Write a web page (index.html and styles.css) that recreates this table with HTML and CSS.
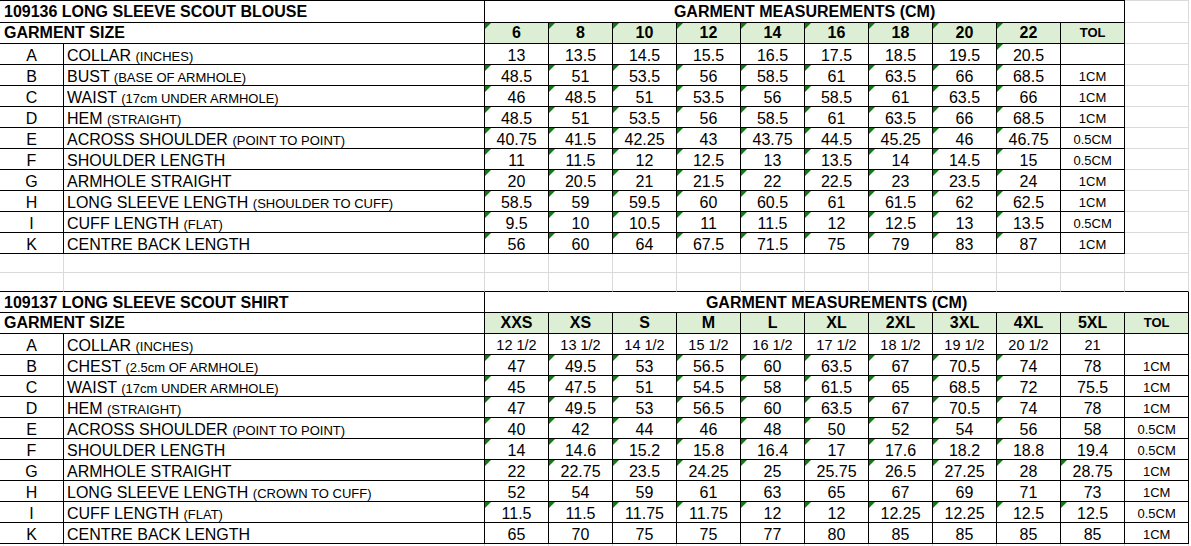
FILE: index.html
```html
<!DOCTYPE html>
<html>
<head>
<meta charset="utf-8">
<title>Scout sizing</title>
<link rel="stylesheet" href="styles.css">
</head>
<body>
<table class="sheet">
<colgroup>
<col class="c-key"><col class="c-label">
<col class="c-n"><col class="c-n"><col class="c-n"><col class="c-n"><col class="c-n"><col class="c-n"><col class="c-n"><col class="c-n"><col class="c-n"><col class="c-n"><col class="c-n">
</colgroup>
<tbody>
<tr class="row-title first">
<td class="title" colspan="2">109136 LONG SLEEVE SCOUT BLOUSE</td>
<td class="hdr" colspan="10">GARMENT MEASUREMENTS (CM)</td>
<td class="g"></td>
</tr>
<tr class="row-head">
<td class="title" colspan="2">GARMENT SIZE</td>
<td class="size t">6</td><td class="size t">8</td><td class="size t">10</td><td class="size t">12</td><td class="size t">14</td><td class="size t">16</td><td class="size t">18</td><td class="size t">20</td><td class="size t">22</td><td class="size tolh">TOL</td>
<td class="g"></td>
</tr>
<tr>
<td>A</td><td class="label">COLLAR <small>(INCHES)</small></td>
<td>13</td><td>13.5</td><td>14.5</td><td>15.5</td><td>16.5</td><td>17.5</td><td>18.5</td><td>19.5</td><td class="t">20.5</td><td class="tol"></td>
<td class="g"></td>
</tr>
<tr>
<td>B</td><td class="label">BUST <small>(BASE OF ARMHOLE)</small></td>
<td class="t">48.5</td><td class="t">51</td><td class="t">53.5</td><td class="t">56</td><td class="t">58.5</td><td class="t">61</td><td class="t">63.5</td><td class="t">66</td><td class="t">68.5</td><td class="tol">1CM</td>
<td class="g"></td>
</tr>
<tr>
<td>C</td><td class="label">WAIST <small>(17cm UNDER ARMHOLE)</small></td>
<td class="t">46</td><td class="t">48.5</td><td class="t">51</td><td class="t">53.5</td><td class="t">56</td><td class="t">58.5</td><td class="t">61</td><td class="t">63.5</td><td class="t">66</td><td class="tol">1CM</td>
<td class="g"></td>
</tr>
<tr>
<td>D</td><td class="label">HEM <small>(STRAIGHT)</small></td>
<td class="t">48.5</td><td class="t">51</td><td class="t">53.5</td><td class="t">56</td><td class="t">58.5</td><td class="t">61</td><td class="t">63.5</td><td class="t">66</td><td class="t">68.5</td><td class="tol">1CM</td>
<td class="g"></td>
</tr>
<tr>
<td>E</td><td class="label">ACROSS SHOULDER <small>(POINT TO POINT)</small></td>
<td class="t">40.75</td><td class="t">41.5</td><td class="t">42.25</td><td class="t">43</td><td class="t">43.75</td><td class="t">44.5</td><td class="t">45.25</td><td class="t">46</td><td class="t">46.75</td><td class="tol">0.5CM</td>
<td class="g"></td>
</tr>
<tr>
<td>F</td><td class="label">SHOULDER LENGTH</td>
<td class="t">11</td><td class="t">11.5</td><td class="t">12</td><td class="t">12.5</td><td class="t">13</td><td class="t">13.5</td><td class="t">14</td><td class="t">14.5</td><td class="t">15</td><td class="tol">0.5CM</td>
<td class="g"></td>
</tr>
<tr>
<td>G</td><td class="label">ARMHOLE STRAIGHT</td>
<td class="t">20</td><td class="t">20.5</td><td class="t">21</td><td class="t">21.5</td><td class="t">22</td><td class="t">22.5</td><td class="t">23</td><td class="t">23.5</td><td class="t">24</td><td class="tol">1CM</td>
<td class="g"></td>
</tr>
<tr>
<td>H</td><td class="label">LONG SLEEVE LENGTH <small>(SHOULDER TO CUFF)</small></td>
<td class="t">58.5</td><td class="t">59</td><td class="t">59.5</td><td class="t">60</td><td class="t">60.5</td><td class="t">61</td><td class="t">61.5</td><td class="t">62</td><td class="t">62.5</td><td class="tol">1CM</td>
<td class="g"></td>
</tr>
<tr>
<td>I</td><td class="label">CUFF LENGTH <small>(FLAT)</small></td>
<td class="t">9.5</td><td class="t">10</td><td class="t">10.5</td><td class="t">11</td><td class="t">11.5</td><td class="t">12</td><td class="t">12.5</td><td class="t">13</td><td class="t">13.5</td><td class="tol">0.5CM</td>
<td class="g"></td>
</tr>
<tr>
<td>K</td><td class="label">CENTRE BACK LENGTH</td>
<td class="t">56</td><td class="t">60</td><td class="t">64</td><td class="t">67.5</td><td class="t">71.5</td><td class="t">75</td><td class="t">79</td><td class="t">83</td><td class="t">87</td><td class="tol">1CM</td>
<td class="g"></td>
</tr>
<tr class="blank">
<td></td><td></td><td></td><td></td><td></td><td></td><td></td><td></td><td></td><td></td><td></td><td></td><td></td>
</tr>
<tr class="blank before-table">
<td></td><td></td><td></td><td></td><td></td><td></td><td></td><td></td><td></td><td></td><td></td><td></td><td class="edge"></td>
</tr>
<tr class="row-title">
<td class="title" colspan="2">109137 LONG SLEEVE SCOUT SHIRT</td>
<td class="hdr" colspan="11">GARMENT MEASUREMENTS (CM)</td>
</tr>
<tr class="row-head">
<td class="title" colspan="2">GARMENT SIZE</td>
<td class="size">XXS</td><td class="size">XS</td><td class="size">S</td><td class="size">M</td><td class="size">L</td><td class="size">XL</td><td class="size">2XL</td><td class="size">3XL</td><td class="size">4XL</td><td class="size">5XL</td><td class="size tolh">TOL</td>
</tr>
<tr>
<td>A</td><td class="label">COLLAR <small>(INCHES)</small></td>
<td class="fr">12 1/2</td><td class="fr">13 1/2</td><td class="fr">14 1/2</td><td class="fr">15 1/2</td><td class="fr">16 1/2</td><td class="fr">17 1/2</td><td class="fr">18 1/2</td><td class="fr">19 1/2</td><td class="fr">20 1/2</td><td class="fr">21</td><td class="tol"></td>
</tr>
<tr>
<td>B</td><td class="label">CHEST <small>(2.5cm OF ARMHOLE)</small></td>
<td class="t">47</td><td class="t">49.5</td><td class="t">53</td><td class="t">56.5</td><td class="t">60</td><td class="t">63.5</td><td class="t">67</td><td class="t">70.5</td><td class="t">74</td><td>78</td><td class="tol">1CM</td>
</tr>
<tr>
<td>C</td><td class="label">WAIST <small>(17cm UNDER ARMHOLE)</small></td>
<td class="t">45</td><td class="t">47.5</td><td class="t">51</td><td class="t">54.5</td><td class="t">58</td><td class="t">61.5</td><td class="t">65</td><td class="t">68.5</td><td class="t">72</td><td>75.5</td><td class="tol">1CM</td>
</tr>
<tr>
<td>D</td><td class="label">HEM <small>(STRAIGHT)</small></td>
<td class="t">47</td><td class="t">49.5</td><td class="t">53</td><td class="t">56.5</td><td class="t">60</td><td class="t">63.5</td><td class="t">67</td><td class="t">70.5</td><td class="t">74</td><td>78</td><td class="tol">1CM</td>
</tr>
<tr>
<td>E</td><td class="label">ACROSS SHOULDER <small>(POINT TO POINT)</small></td>
<td class="t">40</td><td class="t">42</td><td class="t">44</td><td class="t">46</td><td class="t">48</td><td class="t">50</td><td class="t">52</td><td class="t">54</td><td class="t">56</td><td>58</td><td class="tol">0.5CM</td>
</tr>
<tr>
<td>F</td><td class="label">SHOULDER LENGTH</td>
<td class="t">14</td><td class="t">14.6</td><td class="t">15.2</td><td class="t">15.8</td><td class="t">16.4</td><td class="t">17</td><td class="t">17.6</td><td class="t">18.2</td><td class="t">18.8</td><td>19.4</td><td class="tol">0.5CM</td>
</tr>
<tr>
<td>G</td><td class="label">ARMHOLE STRAIGHT</td>
<td class="t">22</td><td class="t">22.75</td><td class="t">23.5</td><td class="t">24.25</td><td class="t">25</td><td class="t">25.75</td><td class="t">26.5</td><td class="t">27.25</td><td class="t">28</td><td class="t">28.75</td><td class="tol">1CM</td>
</tr>
<tr>
<td>H</td><td class="label">LONG SLEEVE LENGTH <small>(CROWN TO CUFF)</small></td>
<td>52</td><td>54</td><td>59</td><td>61</td><td>63</td><td>65</td><td>67</td><td>69</td><td>71</td><td>73</td><td class="tol">1CM</td>
</tr>
<tr>
<td>I</td><td class="label">CUFF LENGTH <small>(FLAT)</small></td>
<td class="t">11.5</td><td class="t">11.5</td><td class="t">11.75</td><td class="t">11.75</td><td class="t">12</td><td class="t">12</td><td class="t">12.25</td><td class="t">12.25</td><td class="t">12.5</td><td class="t">12.5</td><td class="tol">0.5CM</td>
</tr>
<tr>
<td>K</td><td class="label">CENTRE BACK LENGTH</td>
<td>65</td><td>70</td><td>75</td><td>75</td><td>77</td><td>80</td><td>85</td><td>85</td><td>85</td><td>85</td><td class="tol">1CM</td>
</tr>
<tr class="blank">
<td></td><td></td><td></td><td></td><td></td><td></td><td></td><td></td><td></td><td></td><td></td><td></td><td></td>
</tr>
</tbody>
</table>
</body>
</html>
```

FILE: styles.css
```css
html, body {
  margin: 0;
  padding: 0;
  background: #ffffff;
}

.sheet {
  border-collapse: separate;
  border-spacing: 0;
  table-layout: fixed;
  width: 1189px;
  font-family: "Liberation Sans", Arial, sans-serif;
  font-size: 16px;
  color: #000000;
}

.c-key { width: 64px; }
.c-label { width: 421px; }
.c-n { width: 64px; }

.sheet td {
  box-sizing: border-box;
  height: 21px;
  padding: 3px 0 0;
  line-height: 17px;
  vertical-align: top;
  text-align: center;
  white-space: nowrap;
  overflow: visible;
  position: relative;
  border-right: 1px solid #000000;
  border-bottom: 1px solid #000000;
}

.sheet td.g {
  border-right-color: #dadada;
  border-bottom-color: #dadada;
}

.row-title td {
  padding-top: 1px;
  line-height: 19px;
}

.first td {
  height: 23px;
  border-top: 1px solid #000000;
}

.first td.g {
  border-top-color: #dadada;
}

.row-head td {
  padding-top: 0;
  line-height: 20px;
}

.sheet td.title {
  text-align: left;
  padding-left: 4px;
  font-weight: bold;
}

.sheet td.hdr {
  font-weight: bold;
}

.sheet td.size {
  background: #dcefd5;
  font-weight: bold;
}

.sheet td.tolh {
  font-size: 13px;
  padding-top: 2px;
  line-height: 16px;
}

.sheet td.label {
  text-align: left;
  padding-left: 3px;
}

.label small {
  font-size: 13px;
  line-height: 0;
}

.sheet td.tol {
  font-size: 13px;
  padding-top: 4px;
  line-height: 16px;
}

.sheet td.fr {
  font-size: 14.5px;
  padding-top: 3px;
  line-height: 17px;
}

.sheet td.t::before {
  content: "";
  position: absolute;
  top: 0;
  left: 0;
  width: 0;
  height: 0;
  border-top: 6px solid #137a13;
  border-right: 6px solid transparent;
}

.blank td {
  height: 19px;
  padding: 0;
  border-right-color: #dadada;
  border-bottom-color: #dadada;
}

.before-table td {
  border-bottom-color: #000000;
}
```
